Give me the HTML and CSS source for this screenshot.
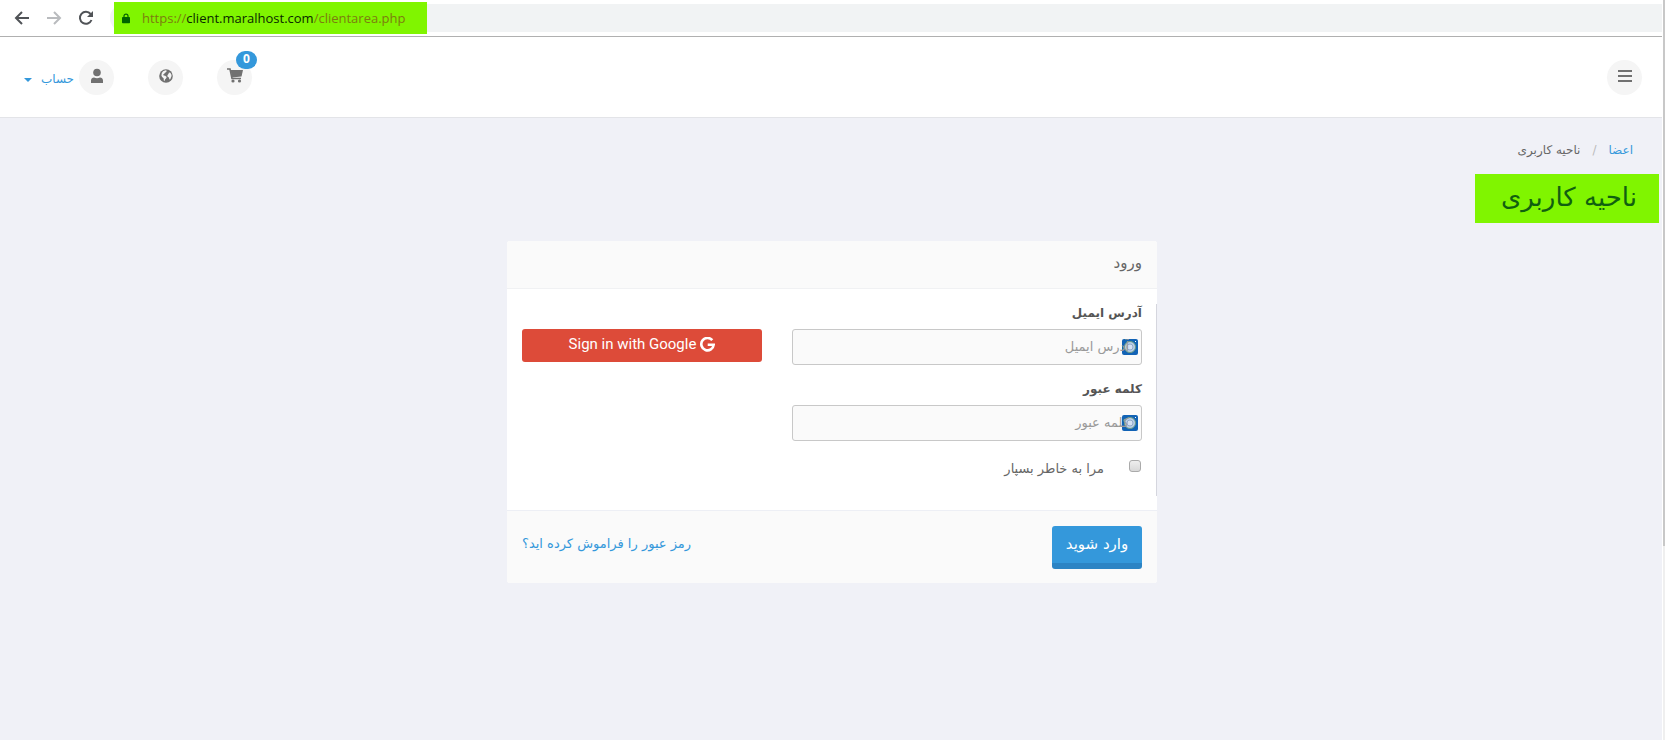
FILE: index.html
```
<!DOCTYPE html>
<html lang="fa">
<head>
	<meta charset="UTF-8">
	<title>ناحیه کاربری</title>
	<link rel="stylesheet" href="styles.css">
</head>
<body>
	<div class="window">
		<div class="browser">
			<button class="nav-btn" type="button" aria-label="Back">
				<svg width="16" height="16" viewBox="0 0 16 16"><path d="M15 8H2M8 2L2 8l6 6" fill="none" stroke="#505357" stroke-width="2"/></svg>
			</button>
			<button class="nav-btn" type="button" aria-label="Forward">
				<svg width="16" height="16" viewBox="0 0 16 16"><path d="M1 8h13M8 2l6 6-6 6" fill="none" stroke="#b9bbbe" stroke-width="2"/></svg>
			</button>
			<button class="nav-btn" type="button" aria-label="Reload">
				<svg width="16" height="16" viewBox="0 0 16 16"><path d="M13.5 10A6 6 0 1 1 12.6 4" fill="none" stroke="#505357" stroke-width="2"/><path d="M15 1v6H9z" fill="#505357"/></svg>
			</button>
			<div class="address">
				<div class="url">
					<svg width="8" height="11" viewBox="0 0 10 13"><path d="M2.5 5V3.500a2.500 2.500 0 0 1 5 0V5" fill="none" stroke="#006400" stroke-width="1.500"/><rect y="4.500" width="10" height="8" rx="1" fill="#006400"/></svg>
					<span>https://<b>client.maralhost.com</b>/clientarea.php</span>
				</div>
			</div>
		</div>

		<header class="header">
			<div class="tools">
				<a class="account" href="#">
					<span class="caret"></span>
					<span class="account-text">حساب</span>
					<span class="circle">
						<svg width="14" height="16" viewBox="0 0 14 16" fill="#717171"><circle cx="7" cy="4.500" r="3.800"/><path d="M1 15v-2.500c0-2 1.500-3 3-3 2 1 4 1 6 0 1.500 0 3 1 3 3V15z"/></svg>
					</span>
				</a>
				<button class="circle" type="button" aria-label="زبان">
					<svg width="14" height="14" viewBox="0 0 14 14"><circle cx="7" cy="7" r="6.800" fill="#717171"/><path d="M6.500 1.300l1.300.5-.6 1.300-1.500.8-.7 1.300-1.100.4.8.9 1.500.2 1.500 1.200-.5 1.400-1.200 1.200-.4 1.600-.8-.5-.2-2.400-1.500-1.200-.7-1.500.4-2.500 1.300-1.800zM10 3.500l1.300.2 1.100 1.800.2 1.600-.6 1.200-.6 1.700-1 .4-.5-2-1.300-.6-.2-1.600 1-1.100z" fill="#f5f5f5"/></svg>
				</button>
				<button class="circle" type="button" aria-label="سبد خرید">
					<svg width="16" height="15" viewBox="0 0 16 15"><path d="M0 1h3l2 9.500h9" fill="none" stroke="#717171" stroke-width="1.600"/><path d="M3.500 2H16l-1.500 6.500-9.500 1z" fill="#717171"/><circle cx="6" cy="13" r="1.600" fill="#717171"/><circle cx="12.500" cy="13" r="1.600" fill="#717171"/></svg>
					<span class="badge">0</span>
				</button>
			</div>
			<button class="circle" type="button" aria-label="منو">
				<svg width="14" height="12" viewBox="0 0 14 12" fill="#717171"><path d="M0 0h14v2H0zM0 5h14v2H0zM0 10h14v2H0z"/></svg>
			</button>
		</header>

		<main class="main" dir="rtl">
			<nav class="breadcrumb">
				<a href="#">اعضا</a>
				<span class="slash">/</span>
				<span>ناحیه کاربری</span>
			</nav>
			<h1 class="title">ناحیه کاربری</h1>

			<form class="card">
				<h2 class="card-head">ورود</h2>
				<div class="card-body">
					<div class="fields">
						<label class="label" for="email">آدرس ایمیل</label>
						<div class="field">
							<svg class="key" width="16" height="16" viewBox="0 0 16 16"><rect width="16" height="16" rx="2" fill="#1263b5"/><circle cx="8" cy="8" r="5.500" fill="#b9cde8" stroke="#6d9c83"/><circle cx="8" cy="8" r="3" fill="#d5e0f2" stroke="#91abc8"/><path d="M13 2h1v1h-1z" fill="#fff"/></svg>
							<input class="input" id="email" type="email" placeholder="آدرس ایمیل">
						</div>
						<label class="label" for="password">کلمه عبور</label>
						<div class="field">
							<svg class="key" width="16" height="16" viewBox="0 0 16 16"><rect width="16" height="16" rx="2" fill="#1263b5"/><circle cx="8" cy="8" r="5.500" fill="#b9cde8" stroke="#6d9c83"/><circle cx="8" cy="8" r="3" fill="#d5e0f2" stroke="#91abc8"/><path d="M13 2h1v1h-1z" fill="#fff"/></svg>
							<input class="input" id="password" type="password" placeholder="کلمه عبور">
						</div>
						<div class="remember">
							<input class="check" id="remember" type="checkbox">
							<label for="remember">مرا به خاطر بسپار</label>
						</div>
					</div>
					<button class="google" type="button" dir="ltr">
						Sign in with Google
						<svg width="15" height="15" viewBox="0 0 15 15"><path d="M12.300 3.200A6.200 6.200 0 1 0 13.700 7.700H7.700" fill="none" stroke="#fff" stroke-width="2.600"/></svg>
					</button>
				</div>
				<div class="card-foot">
					<button class="submit" type="submit">وارد شوید</button>
					<a href="#">رمز عبور را فراموش کرده اید؟</a>
				</div>
			</form>
		</main>
	</div>
	<div class="scrollbar"><div class="thumb"></div></div>
</body>
</html>
```
FILE: styles.css
```
* {
	box-sizing: border-box;
}
body {
	margin: 0;
	min-height: 100vh;
	display: flex;
	background: #f0f1f7;
	color: #666;
	font: 12px/20px "DejaVu Sans", sans-serif;
}
button {
	padding: 0;
	border: 0;
	font-family: inherit;
	cursor: pointer;
}
a {
	color: #3498db;
	text-decoration: none;
}
.window {
	flex: 1;
	display: flex;
	flex-direction: column;
}

/* browser bar */
.browser {
	display: flex;
	align-items: center;
	gap: 16px;
	height: 37px;
	padding-left: 14px;
	background: #fff;
	border-bottom: 1px solid #b0b0b0;
}
.nav-btn {
	display: flex;
	background: none;
}
.address {
	flex: 1;
	height: 28px;
	padding-left: 4px;
	display: flex;
	align-items: center;
	background: #f1f3f4;
	border-radius: 14px 0 0 14px;
}
.url {
	display: flex;
	align-items: center;
	flex-shrink: 0;
	gap: 12px;
	width: 313px;
	height: 32px;
	padding-left: 8px;
	background: #80f500;
	color: #7d7d10;
	font: 13px/20px "Open Sans", sans-serif;
}
.url b {
	color: #0a2800;
	font-weight: 400;
}

/* header */
.header {
	display: flex;
	align-items: center;
	justify-content: space-between;
	height: 81px;
	padding: 0 20px 0 24px;
	background: #fff;
	border-bottom: 1px solid #e3e4e8;
}
.tools {
	display: flex;
	gap: 34px;
}
.account {
	display: flex;
	align-items: center;
}
.account-text {
	width: 34px;
	margin: 3px 5px 0 8px;
	text-align: right;
	white-space: nowrap;
}
.caret {
	margin-top: 5px;
	border: 4px solid transparent;
	border-top-color: #3498db;
	border-bottom: 0;
}
.circle {
	position: relative;
	display: flex;
	align-items: center;
	justify-content: center;
	width: 35px;
	height: 35px;
	border-radius: 50%;
	background: #f5f5f5;
}
.circle > svg {
	margin-bottom: 3px;
}
.badge {
	position: absolute;
	top: -9px;
	right: -5px;
	width: 21px;
	height: 18px;
	border-radius: 9px;
	background: #3498db;
	color: #fff;
	font: bold 12px/16px "Open Sans", sans-serif;
	text-align: center;
}

/* page */
.main {
	padding: 22px 3px 40px 5px;
}
.breadcrumb {
	display: flex;
	gap: 12px;
	padding: 0 26px;
}
.slash {
	color: #bbb;
}
.title {
	width: fit-content;
	margin: 14px 0 18px;
	padding: 0 22px 2px 26px;
	background: #80f500;
	color: #106010;
	font-size: 26px;
	line-height: 47px;
	font-weight: 400;
}
.card {
	width: 650px;
	max-width: 100%;
	margin: 0 auto;
	border-radius: 3px;
	background: #fff;
	overflow: hidden;
}
.card-head {
	margin: 0;
	padding: 12px 15px 15px;
	background: #fafafa;
	border-bottom: 1px solid #f0f1f3;
	font-size: 15px;
	line-height: 20px;
	font-weight: 400;
}
.card-body {
	display: flex;
	margin: 15px 0 14px;
	border-right: 1px solid #d5d6de;
	padding: 0 14px 0 15px;
	gap: 30px;
	min-height: 192px;
}
.fields {
	flex: 1;
}
.label {
	display: block;
	height: 25px;
	line-height: 18px;
	font-weight: 700;
	font-size: 12px;
	color: #555;
}
.field {
	position: relative;
	margin-bottom: 15px;
	border-radius: 3px;
	background: #fafafa;
}
.input {
	position: relative;
	display: block;
	width: 100%;
	height: 36px;
	padding: 0 12px 2px;
	border: 1px solid #c8c8c8;
	border-radius: 3px;
	background: none;
	font: 13px "DejaVu Sans", sans-serif;
}
.input::placeholder {
	color: #999;
}
.key {
	position: absolute;
	top: 10px;
	right: 4px;
}
.remember {
	display: flex;
	gap: 24px;
	padding-top: 3px;
	font-size: 13px;
}
.check {
	appearance: none;
	width: 12px;
	height: 12px;
	margin: 1px;
	border: 1px solid #aaa;
	border-radius: 3px;
	background: linear-gradient(#eee, #d8d8d8);
}
.check:checked {
	background: #3498db;
}
.google {
	display: flex;
	align-items: center;
	justify-content: center;
	gap: 4px;
	width: 240px;
	height: 33px;
	margin-top: 25px;
	padding-bottom: 3px;
	border-radius: 3px;
	background: #dd4b39;
	color: #fff;
	font: 15px/20px Roboto, sans-serif;
}
.card-foot {
	display: flex;
	justify-content: space-between;
	align-items: flex-start;
	padding: 15px 15px 14px;
	background: #fafafa;
	border-top: 1px solid #edeff5;
}
.card-foot a {
	font-size: 13px;
	line-height: 36px;
}
.submit {
	width: 90px;
	height: 43px;
	padding-bottom: 2px;
	border-bottom: 6px solid #2c84c4;
	border-radius: 3px;
	background: #3498db;
	color: #fff;
	font-size: 15px;
}

.scrollbar {
	width: 3px;
	border-left: 1px solid #fff;
	background: #efefef;
}
.thumb {
	height: 546px;
	background: #c8c8c8;
}
```
